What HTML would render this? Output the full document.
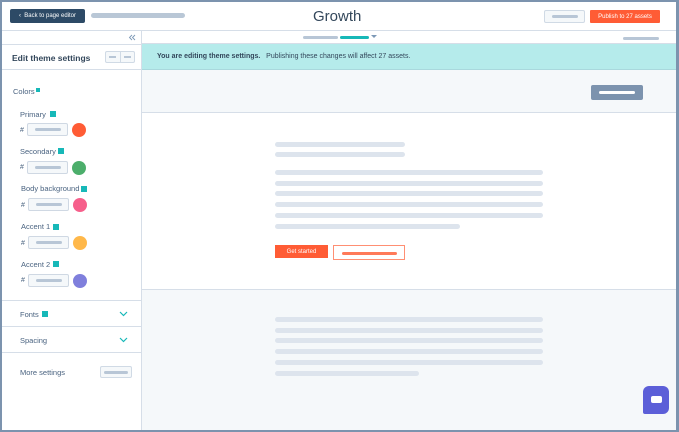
<!DOCTYPE html>
<html><head><style>
*{box-sizing:border-box;margin:0;padding:0}
body{width:679px;height:432px;overflow:hidden;font-family:"Liberation Sans",sans-serif;background:#fff;position:relative}
.a{position:absolute}
.frame{left:0;top:0;width:679px;height:432px;border:2px solid #7c93ae;border-right-width:3px;z-index:10;pointer-events:none}
.bar{position:absolute;border-radius:3px;background:#dde4ed}
.lbl{position:absolute;font-size:7.5px;color:#4a6380}
.sq{position:absolute;width:6px;height:6px;background:#17b8b8}
.inp{position:absolute;width:41px;height:13px;border:1px solid #cfd8e3;border-radius:2px;background:#f5f8fa}
.inp:after{content:"";position:absolute;left:7px;top:4px;width:26px;height:3px;border-radius:2px;background:#b8c6d6}
.hash{position:absolute;font-size:7px;color:#4a6380}
.dot{position:absolute;width:14px;height:14px;border-radius:50%}
.btn{display:flex;align-items:center;justify-content:center;color:#fff;font-size:6px}
</style></head><body>
<div class="a frame"></div>
<!-- header -->
<div class="a" style="left:0;top:0;width:679px;height:31px;border-bottom:1px solid #d6dee8;background:#fff"></div>
<div class="a btn" style="left:10px;top:9px;width:75px;height:14px;background:#2d4a66;border-radius:2px">‹&nbsp; Back to page editor</div>
<div class="a" style="left:91px;top:13px;width:94px;height:5px;background:#b9c7d6;border-radius:3px"></div>
<div class="a" style="left:313px;top:8px;font-size:15px;color:#33475b">Growth</div>
<div class="a" style="left:544px;top:10px;width:41px;height:13px;border:1px solid #d0dae5;background:#f5f8fa;border-radius:2px"></div>
<div class="a" style="left:552px;top:15px;width:26px;height:3px;background:#b8c6d6;border-radius:2px"></div>
<div class="a btn" style="left:590px;top:10px;width:70px;height:13px;background:#ff5c35;border-radius:1px">Publish to 27 assets</div>
<!-- sidebar -->
<div class="a" style="left:141px;top:31px;width:1px;height:401px;background:#d6dee8"></div>
<svg class="a" style="left:128px;top:34px" width="8" height="7"><path d="M4 1L1.5 3.5L4 6M7 1L4.5 3.5L7 6" stroke="#7c98b6" stroke-width="0.9" fill="none"/></svg>
<div class="a" style="left:0;top:44px;width:141px;height:1px;background:#d6dee8"></div>
<div class="a" style="left:12px;top:53px;font-size:8.5px;color:#33475b;font-weight:bold">Edit theme settings</div>
<div class="a" style="left:105px;top:51px;width:30px;height:12px;border:1px solid #d0dae5;background:#f5f8fa;border-radius:2px"></div>
<div class="a" style="left:120px;top:51px;width:1px;height:12px;background:#d0dae5"></div>
<div class="a" style="left:109px;top:56px;width:7px;height:2px;background:#b8c6d6"></div>
<div class="a" style="left:124px;top:56px;width:7px;height:2px;background:#b8c6d6"></div>
<div class="a" style="left:0;top:69px;width:141px;height:1px;background:#d6dee8"></div>
<div class="lbl" style="left:13px;top:87px">Colors</div>
<div class="sq" style="left:36px;top:88px;width:4px;height:4px"></div>

<div class="lbl" style="left:20px;top:110px">Primary</div><div class="sq" style="left:50px;top:111px"></div>
<div class="hash" style="left:20px;top:127px">#</div><div class="inp" style="left:27px;top:123px"></div><div class="dot" style="left:72px;top:123px;background:#ff5c35"></div>

<div class="lbl" style="left:20px;top:147px">Secondary</div><div class="sq" style="left:58px;top:148px"></div>
<div class="hash" style="left:20px;top:164px">#</div><div class="inp" style="left:27px;top:161px"></div><div class="dot" style="left:72px;top:161px;background:#4cae6b"></div>

<div class="lbl" style="left:21px;top:184px">Body background</div><div class="sq" style="left:81px;top:186px"></div>
<div class="hash" style="left:21px;top:202px">#</div><div class="inp" style="left:28px;top:198px"></div><div class="dot" style="left:73px;top:198px;background:#f65f8b"></div>

<div class="lbl" style="left:21px;top:222px">Accent 1</div><div class="sq" style="left:53px;top:224px"></div>
<div class="hash" style="left:21px;top:240px">#</div><div class="inp" style="left:28px;top:236px"></div><div class="dot" style="left:73px;top:236px;background:#ffb84a"></div>

<div class="lbl" style="left:21px;top:260px">Accent 2</div><div class="sq" style="left:53px;top:261px"></div>
<div class="hash" style="left:21px;top:277px">#</div><div class="inp" style="left:28px;top:274px"></div><div class="dot" style="left:73px;top:274px;background:#7f7fdc"></div>

<div class="a" style="left:0;top:300px;width:141px;height:1px;background:#d6dee8"></div>
<div class="lbl" style="left:20px;top:310px">Fonts</div><div class="sq" style="left:42px;top:311px"></div>
<svg class="a" style="left:119px;top:311px" width="9" height="6"><path d="M1 1L4.5 4.5L8 1" stroke="#17b8b8" stroke-width="1.2" fill="none"/></svg>
<div class="a" style="left:0;top:326px;width:141px;height:1px;background:#d6dee8"></div>
<div class="lbl" style="left:20px;top:336px">Spacing</div>
<svg class="a" style="left:119px;top:337px" width="9" height="6"><path d="M1 1L4.5 4.5L8 1" stroke="#17b8b8" stroke-width="1.2" fill="none"/></svg>
<div class="a" style="left:0;top:352px;width:141px;height:1px;background:#d6dee8"></div>
<div class="lbl" style="left:20px;top:368px">More settings</div>
<div class="a" style="left:100px;top:366px;width:32px;height:12px;border:1px solid #d0dae5;background:#f5f8fa;border-radius:2px"></div>
<div class="a" style="left:104px;top:371px;width:24px;height:3px;background:#b8c6d6;border-radius:2px"></div>
<!-- main -->
<div class="a" style="left:142px;top:43px;width:537px;height:1px;background:#d6dee8"></div>
<div class="a" style="left:303px;top:36px;width:35px;height:3px;background:#b8c6d6;border-radius:2px"></div>
<div class="a" style="left:340px;top:36px;width:29px;height:3px;background:#17b8b8;border-radius:2px"></div>
<div class="a" style="left:371px;top:35px;width:0;height:0;border-left:3px solid transparent;border-right:3px solid transparent;border-top:3px solid #7c98b6"></div>
<div class="a" style="left:623px;top:37px;width:36px;height:3px;background:#b8c6d6;border-radius:2px"></div>
<div class="a" style="left:142px;top:44px;width:537px;height:26px;background:#b5ebeb;border-bottom:1px solid #a9d8dd"></div>
<div class="a" style="left:157px;top:53px;font-size:7px;color:#33475b"><b>You are editing theme settings.</b>&nbsp;&nbsp; Publishing these changes will affect 27 assets.</div>
<div class="a" style="left:142px;top:70px;width:537px;height:43px;background:#f5f8fa;border-bottom:1px solid #d6dee8"></div>
<div class="a" style="left:591px;top:85px;width:52px;height:15px;background:#7c93ae;border-radius:2px"></div>
<div class="a" style="left:599px;top:91px;width:36px;height:3px;background:#fff;border-radius:2px"></div>
<div class="bar" style="left:275px;top:142px;width:130px;height:5px"></div>
<div class="bar" style="left:275px;top:152px;width:130px;height:5px"></div>
<div class="bar" style="left:275px;top:170px;width:268px;height:5px"></div>
<div class="bar" style="left:275px;top:181px;width:268px;height:5px"></div>
<div class="bar" style="left:275px;top:191px;width:268px;height:5px"></div>
<div class="bar" style="left:275px;top:202px;width:268px;height:5px"></div>
<div class="bar" style="left:275px;top:213px;width:268px;height:5px"></div>
<div class="bar" style="left:275px;top:224px;width:185px;height:5px"></div>
<div class="a btn" style="left:275px;top:245px;width:53px;height:13px;background:#ff5c35">Get started</div>
<div class="a" style="left:333px;top:245px;width:72px;height:15px;border:1px solid #ff8f73"></div>
<div class="a" style="left:342px;top:252px;width:55px;height:3px;background:#ff7a59;border-radius:2px"></div>
<div class="a" style="left:142px;top:289px;width:537px;height:143px;background:#f5f8fa;border-top:1px solid #d6dee8"></div>
<div class="bar" style="left:275px;top:317px;width:268px;height:5px"></div>
<div class="bar" style="left:275px;top:328px;width:268px;height:5px"></div>
<div class="bar" style="left:275px;top:338px;width:268px;height:5px"></div>
<div class="bar" style="left:275px;top:349px;width:268px;height:5px"></div>
<div class="bar" style="left:275px;top:360px;width:268px;height:5px"></div>
<div class="bar" style="left:275px;top:371px;width:144px;height:5px"></div>
<div class="a" style="left:643px;top:386px;width:26px;height:28px;background:#5c5fd8;border-radius:6px 6px 6px 2px"></div>
<div class="a" style="left:651px;top:396px;width:11px;height:7px;background:#fff;border-radius:2px"></div>
</body></html>
